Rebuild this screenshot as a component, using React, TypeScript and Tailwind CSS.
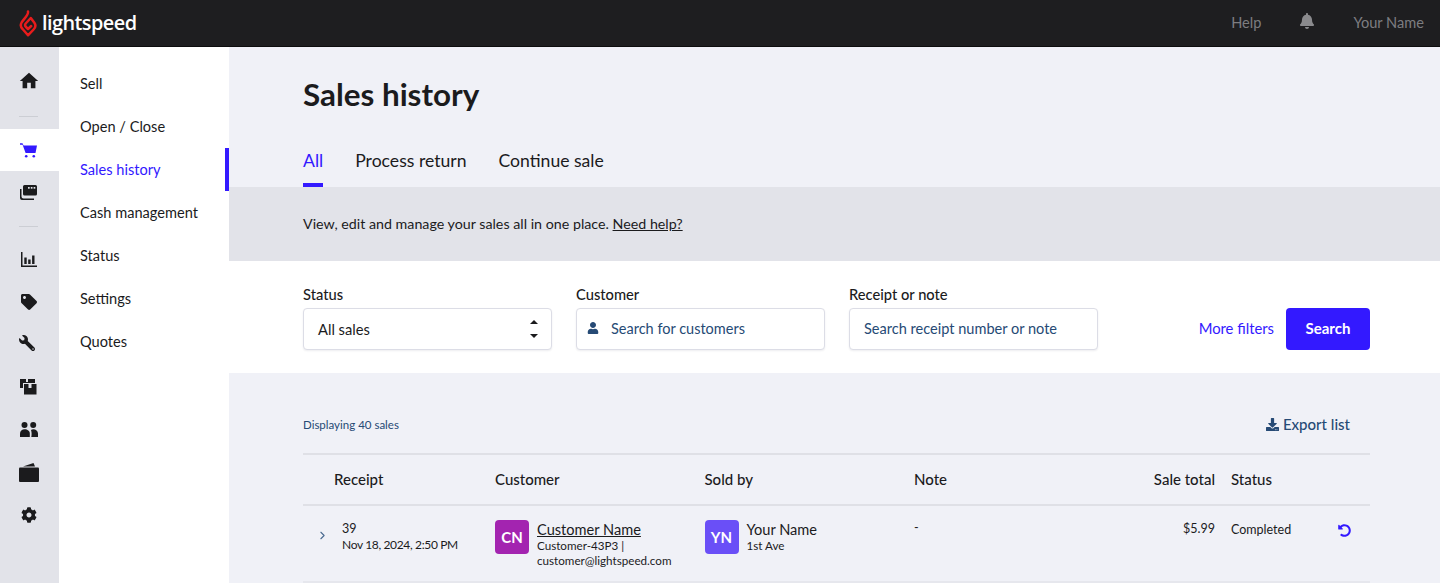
import type { ReactNode } from "react";
import { FaBell, FaCog, FaDownload, FaTag, FaUndoAlt, FaUser, FaWrench } from "react-icons/fa";
import { FiChevronRight } from "react-icons/fi";
import { MdHome } from "react-icons/md";

const subNav = ["Sell", "Open / Close", "Sales history", "Cash management", "Status", "Settings", "Quotes"];

function Flame() {
  return (
    <svg width="18" height="27" viewBox="0 0 18 27" fill="none" stroke="#e81c1c" strokeWidth="2.5" strokeLinejoin="round" strokeLinecap="round">
      <path d="M9 1.500C9.800 5 5 8.500 2.600 12.500C1.200 15 1.800 17.300 3.600 19L9 25.300L14.600 19.500C16.600 17.500 17 15 15.200 12.500L11.800 8L6.700 13.500C5.600 14.900 6 16 7 17L9 19L12.200 16" />
    </svg>
  );
}

function CartIcon() {
  return (
    <svg width="17" height="15" viewBox="0 0 17 15" fill="#3319ff">
      <path d="M0 0.300h2.500l1 2.200H17l-1.500 7.500H5.600L2.600 1.800H0Z" />
      <circle cx="6.200" cy="13.300" r="1.300" />
      <circle cx="13.800" cy="13.300" r="1.300" />
    </svg>
  );
}

function BookIcon() {
  return (
    <svg width="17" height="15" viewBox="0 0 17 15" fill="#1b1b1d">
      <path d="M4.500 0h11A1.500 1.500 0 0 1 17 1.500V9a1.500 1.500 0 0 1-1.500 1.500h-11A1.500 1.500 0 0 1 3 9V1.500A1.500 1.500 0 0 1 4.500 0Z" />
      <path d="M0 4h1.500v7.500a2 2 0 0 0 2 2H14V15H2a2 2 0 0 1-2-2Z" />
      <rect x="8" y="2" width="1.700" height="1.700" fill="#e2e3e9" />
      <rect x="10.800" y="2" width="1.700" height="1.700" fill="#e2e3e9" />
      <rect x="13.600" y="2" width="1.700" height="1.700" fill="#e2e3e9" />
    </svg>
  );
}

function ChartIcon() {
  return (
    <svg width="16" height="15" viewBox="0 0 16 15" fill="#1b1b1d">
      <path d="M0 0h1.500v13.500H16V15H0Z" />
      <rect x="3.300" y="5.500" width="2.400" height="6.500" />
      <rect x="7.200" y="7.500" width="2.400" height="4.500" />
      <rect x="11.100" y="3.500" width="2.400" height="8.500" />
    </svg>
  );
}

function BoxesIcon() {
  return (
    <svg width="17" height="16" viewBox="0 0 17 16" fill="#1b1b1d">
      <path d="M0 0h6v3h2V0h7v9H0Z" />
      <rect x="3.500" y="4.500" width="13.500" height="11.500" stroke="#e2e3e9" strokeWidth="1" />
      <rect x="8.500" y="5" width="3" height="4" fill="#e2e3e9" />
    </svg>
  );
}

function UsersIcon() {
  return (
    <svg width="18" height="15" viewBox="0 0 18 15" fill="#1b1b1d">
      <circle cx="4.500" cy="3" r="3" />
      <circle cx="13.200" cy="3" r="3" />
      <path d="M0 15v-3.500C0 9 2 7.300 4.700 7.300S9.800 9 9.800 11.500V15Z" />
      <path d="M11 8C11.700 7.500 12.400 7.300 13.300 7.300C15.800 7.300 18 9 18 11.500V15H11.300C11.800 13 11.800 10 11 8Z" />
    </svg>
  );
}

function WalletIcon() {
  return (
    <svg width="20" height="19" viewBox="0 0 20 19" fill="#1b1b1d">
      <path d="M4 3.500L14.500 0L16 3.500Z" />
      <rect x="0" y="4.500" width="20" height="14.500" rx="1" />
    </svg>
  );
}

function StepperIcon() {
  return (
    <svg width="8" height="18" viewBox="0 0 8 18" fill="#1b1b1d">
      <path d="M4 0 8 4H0Z" />
      <path d="M4 18 0 14h8Z" />
    </svg>
  );
}

function RailButton({ children, active }: { children: ReactNode; active?: boolean }) {
  return (
    <div className={active ? "flex h-[42px] items-center justify-center bg-white pr-[2px]" : "flex h-[42.500px] items-center justify-center pr-[2px]"}>
      {children}
    </div>
  );
}

function Avatar({ text, color }: { text: string; color: string }) {
  return (
    <div className={`flex h-[34px] w-[34px] shrink-0 items-center justify-center rounded-[4px] text-[15px] font-bold text-white ${color}`}>
      {text}
    </div>
  );
}

export default function App() {
  return (
    <div className="flex h-[583px] w-[1440px] flex-col overflow-hidden bg-[#f0f1f7] font-['Lato',sans-serif] text-[#1b1b1d]">
      <header className="flex h-[47px] shrink-0 items-center justify-between border-b border-[#0d0d0e] bg-[#1e1e20] pl-[19px] pr-[16px]">
        <div className="flex items-center gap-[5px]">
          <Flame />
          <span className="font-['Open_Sans',sans-serif] text-[19.900px] leading-none font-semibold tracking-[-0.55px] text-white">lightspeed</span>
        </div>
        <div className="flex items-center text-[14.600px] text-[#7d7d80]">
          <span>Help</span>
          <FaBell className="mx-[38px] mb-[3px] text-[16px] text-[#8a8a8d]" />
          <span>Your Name</span>
        </div>
      </header>

      <div className="flex min-h-0 flex-1">
        <nav className="flex w-[59px] shrink-0 flex-col bg-[#e2e3e9] pt-[13px] text-[#1b1b1d]">
          <RailButton><MdHome className="text-[22px]" /></RailButton>
          <div className="mx-auto mt-[13px] mb-[12.500px] h-px w-[19px] -translate-x-px bg-[#ccced4]" />
          <RailButton active><CartIcon /></RailButton>
          <RailButton><BookIcon /></RailButton>
          <div className="mx-auto mt-[12px] mb-[12px] h-px w-[19px] -translate-x-px bg-[#ccced4]" />
          <RailButton><ChartIcon /></RailButton>
          <RailButton><FaTag className="text-[16px]" /></RailButton>
          <RailButton><FaWrench className="-mt-[3px] -ml-[3px] -scale-x-100 text-[16px]" /></RailButton>
          <RailButton><BoxesIcon /></RailButton>
          <RailButton><UsersIcon /></RailButton>
          <RailButton><WalletIcon /></RailButton>
          <RailButton><FaCog className="text-[16px]" /></RailButton>
        </nav>

        <aside className="w-[170px] shrink-0 bg-white pt-[14.500px] text-[14.600px]">
          {subNav.map((item) => (
            <div
              key={item}
              className={
                item === "Sales history"
                  ? "flex h-[43px] items-center border-r-4 border-[#3319ff] pt-[2px] pl-[21px] text-[#3319ff]"
                  : "flex h-[43px] items-center pt-[2px] pl-[21px]"
              }
            >
              {item}
            </div>
          ))}
        </aside>

        <main className="min-w-0 flex-1">
          <div className="h-[140px] pl-[74px]">
            <h1 className="pt-[27px] text-[31.400px] leading-[40px] font-bold">Sales history</h1>
            <div className="mt-[25px] flex gap-[32px] text-[17.600px]">
              <div className="flex h-[48px] flex-col justify-between pt-[11px] text-[#3319ff]">
                <span className="leading-[22px]">All</span>
                <span className="h-[4px] bg-[#3319ff]" />
              </div>
              <span className="pt-[11px] leading-[22px]">Process return</span>
              <span className="pt-[11px] leading-[22px]">Continue sale</span>
            </div>
          </div>

          <div className="flex h-[74px] items-center bg-[#e2e3e9] pl-[74px] text-[14.250px]">
            View, edit and manage your sales all in one place.&nbsp;<span className="underline">Need help?</span>
          </div>

          <div className="flex h-[112px] items-end bg-white pr-[70px] pb-[23px] pl-[74px]">
            <label className="mr-[24px] block w-[249px] text-[14.700px] font-medium">
              <span className="mb-[4px] block leading-[20px]">Status</span>
              <div className="flex h-[42px] items-center justify-between rounded-[4px] border border-[#dcdde6] bg-white pr-[13px] pl-[14px] font-normal shadow-[0_1px_2px_rgba(30,30,60,0.08)]">
                All sales
                <StepperIcon />
              </div>
            </label>
            <label className="mr-[24px] block w-[249px] text-[14.700px] font-medium">
              <span className="mb-[4px] block leading-[20px]">Customer</span>
              <div className="flex h-[42px] items-center rounded-[4px] border border-[#dcdde6] bg-white pl-[10px] font-normal text-[#264a75] shadow-[0_1px_2px_rgba(30,30,60,0.08)]">
                <FaUser className="mr-[12px] mb-[3px] text-[12px]" />
                <span className="text-[14.500px]">Search for customers</span>
              </div>
            </label>
            <label className="block w-[249px] text-[14.700px] font-medium">
              <span className="mb-[4px] block leading-[20px]">Receipt or note</span>
              <div className="flex h-[42px] items-center rounded-[4px] border border-[#dcdde6] bg-white pl-[14px] font-normal text-[#264a75] shadow-[0_1px_2px_rgba(30,30,60,0.08)]">
                <span className="text-[14.550px]">Search receipt number or note</span>
              </div>
            </label>
            <span className="mb-[12px] ml-auto text-[14.800px] leading-[20px] text-[#3319ff]">More filters</span>
            <button className="ml-[12px] h-[42px] w-[84px] rounded-[4px] bg-[#3319ff] pb-[1px] text-[15px] font-bold text-white">Search</button>
          </div>

          <div className="pr-[70px] pl-[74px]">
            <div className="flex h-[82px] items-center justify-between border-b-2 border-[#dfe0e6] pt-[23px] pr-[20px]">
              <span className="text-[11.500px] text-[#264a75]">Displaying 40 sales</span>
              <span className="flex items-center gap-[4px] text-[15px] font-medium text-[#264a75]">
                <FaDownload className="text-[13px]" />
                Export list
              </span>
            </div>

            <div className="flex h-[51px] items-center border-b-2 border-[#dfe0e6] text-[15px] font-medium">
              <span className="w-[192px] pl-[31px]">Receipt</span>
              <span className="w-[209.500px]">Customer</span>
              <span className="w-[209.500px]">Sold by</span>
              <span className="w-[201px]">Note</span>
              <span className="w-[100px] text-right">Sale total</span>
              <span className="pl-[16px]">Status</span>
            </div>

            <div className="flex h-[77px] border-b-2 border-[#e6e7ed] pt-[14px] text-[12.500px]">
              <div className="flex w-[31px] pt-[9px] text-[#4a6a90]"><FiChevronRight className="ml-[13px] text-[13px]" /></div>
              <div className="w-[161px] pt-[1px] pl-[8px] leading-[15.500px]">
                <div>39</div>
                <div className="text-[12px] tracking-[-0.35px]">Nov 18, 2024, 2:50 PM</div>
              </div>
              <div className="flex w-[209.500px] gap-[8px]">
                <Avatar text="CN" color="bg-[#a324b0]" />
                <div>
                  <div className="text-[14.600px] leading-[19px] underline">Customer Name</div>
                  <div className="-mt-[1px] text-[11.650px] leading-[15px]">Customer-43P3 |<br />customer@lightspeed.com</div>
                </div>
              </div>
              <div className="flex w-[209.500px] gap-[8px]">
                <Avatar text="YN" color="bg-[#6a4ff7]" />
                <div>
                  <div className="text-[14.600px] leading-[19px]">Your Name</div>
                  <div className="-mt-[1px] text-[11.650px] leading-[15px]">1st Ave</div>
                </div>
              </div>
              <span className="w-[201px] leading-[16px]">-</span>
              <span className="w-[100px] pt-[1px] text-right leading-[16px]">$5.99</span>
              <span className="w-[123px] pt-[2px] pl-[16px] leading-[16px]">Completed</span>
              <FaUndoAlt className="mt-[4px] text-[13px] text-[#3319ff]" />
            </div>
          </div>
        </main>
      </div>
    </div>
  );
}
